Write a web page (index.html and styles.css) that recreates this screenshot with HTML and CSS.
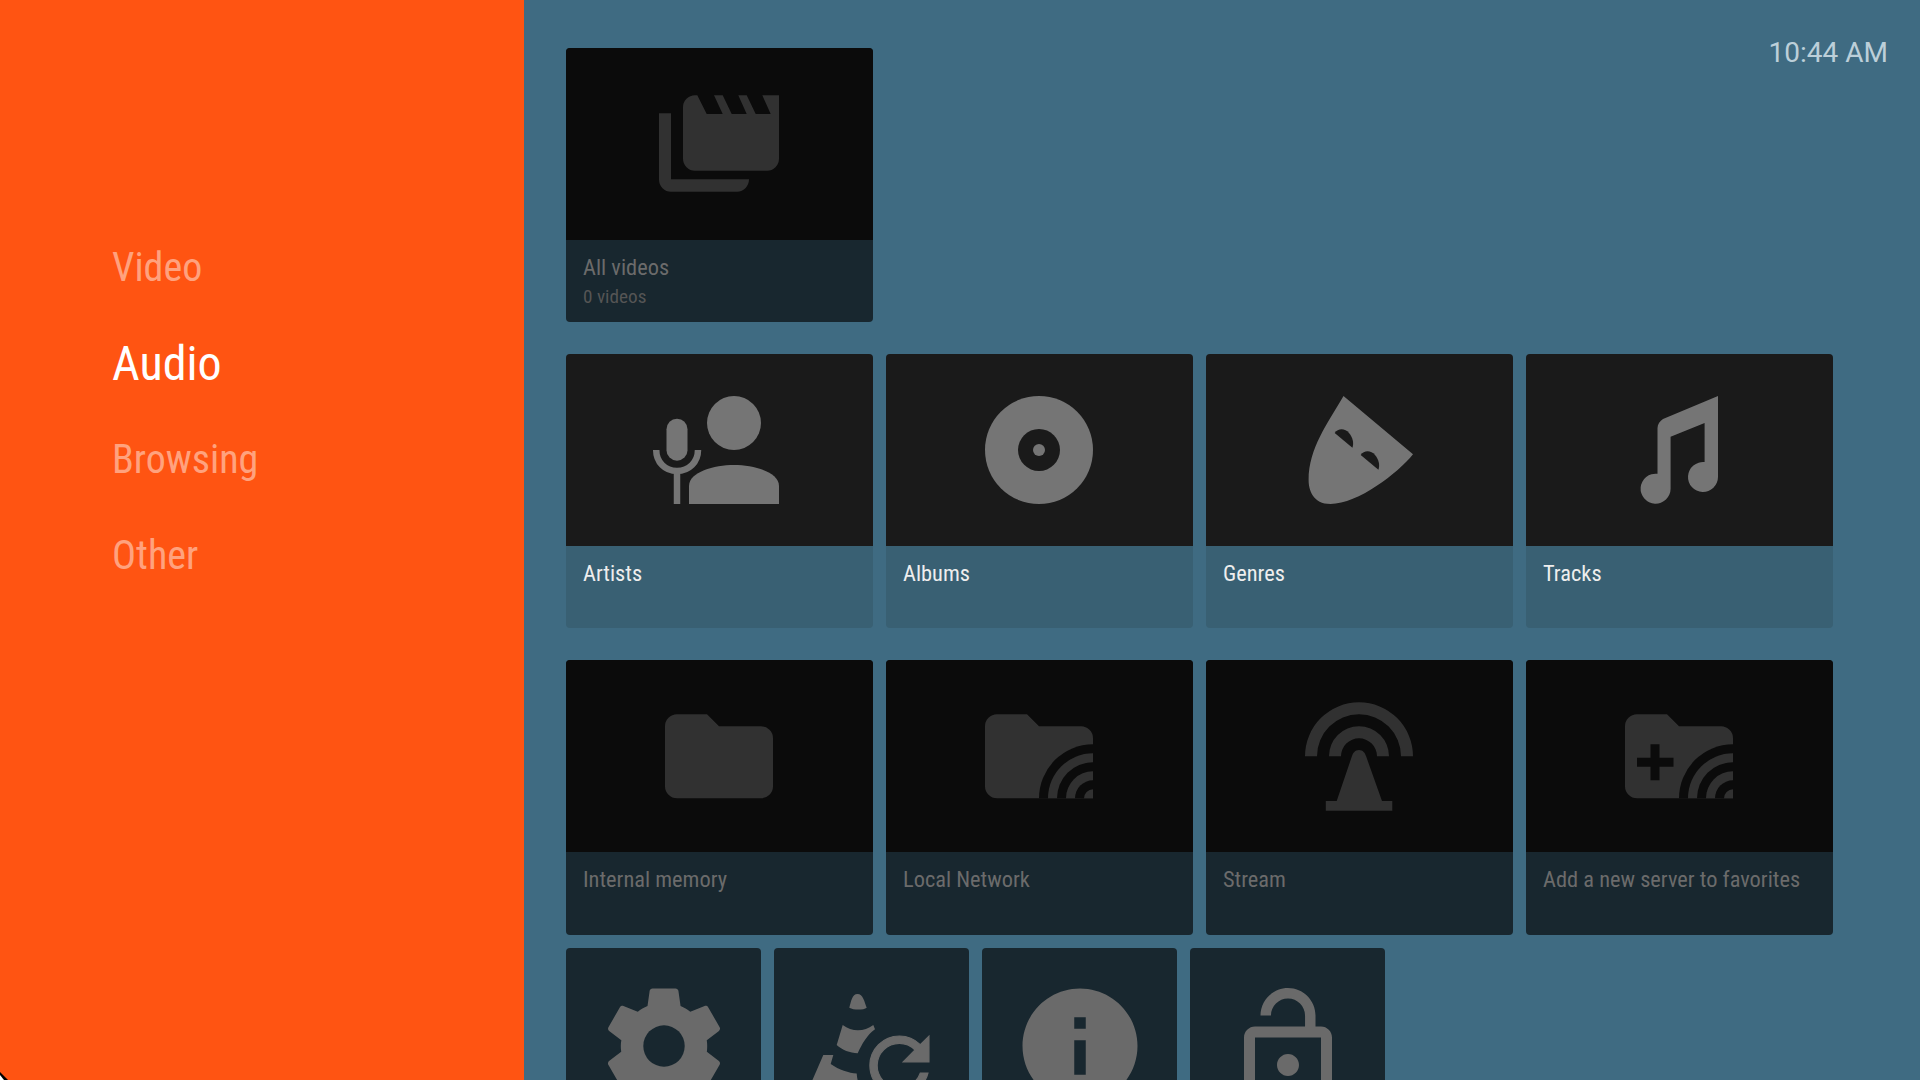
FILE: index.html
```html
<!DOCTYPE html>
<html lang="en">
<head>
<meta charset="utf-8">
<title>VLC</title>
<link rel="stylesheet" href="styles.css">
</head>
<body>
<aside class="sidebar">
  <nav class="nav">
    <div class="nav-item">Video</div>
    <div class="nav-item active">Audio</div>
    <div class="nav-item">Browsing</div>
    <div class="nav-item">Other</div>
  </nav>
</aside>
<main class="main">
  <section class="row row-top">
    <article class="card dim">
      <div class="thumb"><svg class="icon" viewBox="0 0 144 144"><path d="M11 41.3H23V107.3H101C101 114 96 119.7 89 119.7H23A12 12 0 0 1 11 107.7Z"/><path d="M35 35.3A12 12 0 0 1 47 23.3H49.3L58.7 42H74.7L66 23.3H74.7L83.7 42H98.7L90.3 23.3H98.7L107.7 42H122.7L114.3 23.3H131V86.7A12 12 0 0 1 119 98.7H47A12 12 0 0 1 35 86.7Z"/></svg></div>
      <div class="footer"><div class="title">All videos</div><div class="sub">0 videos</div></div>
    </article>
    <div class="clock">10:44 AM</div>
  </section>
  <section class="row">
    <article class="card">
      <div class="thumb"><svg class="icon" viewBox="0 0 144 144"><circle cx="86" cy="45" r="27"/><path d="M41 126V108C41 94 66 87 86 87S131 94 131 108V126Z"/><rect x="18.5" y="40.7" width="21" height="42" rx="10.5"/><path class="line" d="M8.2 72C8.2 84 17 93 29 93S50 84 50 72M29 93V126"/></svg></div>
      <div class="footer"><div class="title">Artists</div></div>
    </article>
    <article class="card">
      <div class="thumb"><svg class="icon" viewBox="0 0 144 144"><circle cx="71" cy="72" r="54"/><circle class="cut" cx="71" cy="72" r="21"/><circle cx="71" cy="72" r="6"/></svg></div>
      <div class="footer"><div class="title">Albums</div></div>
    </article>
    <article class="card">
      <div class="thumb"><svg class="icon" viewBox="0 0 144 144"><path d="M55.5 18L125 76.3C110 95 70 126 42.5 126C25 126 20.6 112 20.6 102C20.6 70 40 45 55.5 18Z"/><path class="cut" d="M46.7 55C50 50 57 50 61 55C65 60 66 65 64.4 69.7Z"/><path class="cut" d="M72.7 77C76 72 83 72 87 77C91 82 92 87 90.4 91.7Z"/></svg></div>
      <div class="footer"><div class="title">Genres</div></div>
    </article>
    <article class="card">
      <div class="thumb"><svg class="icon" viewBox="0 0 144 144"><path d="M110 18V99A15 15 0 1 1 96.6 84.1V45L62.6 58.7V110.7A15 15 0 1 1 49.5 95.8V50C49.5 46 52 43 55 41Z"/></svg></div>
      <div class="footer"><div class="title">Tracks</div></div>
    </article>
  </section>
  <section class="row row-third">
    <article class="card dim">
      <div class="thumb"><svg class="icon" viewBox="0 0 144 144"><path d="M29 30.3H59L71 42.3H113A12 12 0 0 1 125 54.3V102.3A12 12 0 0 1 113 114.3H29A12 12 0 0 1 17 102.3V42.3A12 12 0 0 1 29 30.3Z"/></svg></div>
      <div class="footer"><div class="title">Internal memory</div></div>
    </article>
    <article class="card dim">
      <div class="thumb"><svg class="icon" viewBox="0 0 144 144"><path d="M29 30.3H59L71 42.3H113A12 12 0 0 1 125 54.3V102.3A12 12 0 0 1 113 114.3H29A12 12 0 0 1 17 102.3V42.3A12 12 0 0 1 29 30.3Z"/><path class="cut" d="M125 60.3A54 54 0 0 0 71 114.3H125Z"/><path d="M125 69.3A45 45 0 0 0 80 114.3H125Z"/><path class="cut" d="M125 78.3A36 36 0 0 0 89 114.3H125Z"/><path d="M125 87.3A27 27 0 0 0 98 114.3H125Z"/><path class="cut" d="M125 96.3A18 18 0 0 0 107 114.3H125Z"/><path d="M125 105.3A9 9 0 0 0 116 114.3H125Z"/></svg></div>
      <div class="footer"><div class="title">Local Network</div></div>
    </article>
    <article class="card dim">
      <div class="thumb"><svg class="icon" viewBox="0 0 144 144"><path d="M17 72.3A54 54 0 0 1 125 72.3H113A42 42 0 0 0 29 72.3Z"/><path d="M41 72.3A30 30 0 0 1 101 72.3H89A18 18 0 0 0 53 72.3Z"/><path d="M71 66C75 66 77 69 78 72L94 117H104.3V126.7H37.8V117H48.7L64 72C65 69 67 66 71 66Z"/></svg></div>
      <div class="footer"><div class="title">Stream</div></div>
    </article>
    <article class="card dim">
      <div class="thumb"><svg class="icon" viewBox="0 0 144 144"><path d="M29 30.3H59L71 42.3H113A12 12 0 0 1 125 54.3V102.3A12 12 0 0 1 113 114.3H29A12 12 0 0 1 17 102.3V42.3A12 12 0 0 1 29 30.3Z"/><path class="cut" d="M125 60.3A54 54 0 0 0 71 114.3H125Z"/><path d="M125 69.3A45 45 0 0 0 80 114.3H125Z"/><path class="cut" d="M125 78.3A36 36 0 0 0 89 114.3H125Z"/><path d="M125 87.3A27 27 0 0 0 98 114.3H125Z"/><path class="cut" d="M125 96.3A18 18 0 0 0 107 114.3H125Z"/><path d="M125 105.3A9 9 0 0 0 116 114.3H125Z"/><path class="cut" d="M42.5 60.3H51.5V73.8H65.5V82.8H51.5V96.3H42.5V82.8H29V73.8H42.5Z"/></svg></div>
      <div class="footer"><div class="title">Add a new server to favorites</div></div>
    </article>
  </section>
  <section class="row row-tiles">
    <div class="tile"><svg class="tile-gear" viewBox="0 0 24 24"><path d="M19.14 12.94c.04-.3.06-.61.06-.94 0-.32-.02-.64-.07-.94l2.03-1.58c.18-.14.23-.41.12-.61l-1.92-3.32c-.12-.22-.37-.29-.59-.22l-2.39.96c-.5-.38-1.03-.7-1.62-.94l-.36-2.54c-.04-.24-.24-.41-.48-.41h-3.84c-.24 0-.43.17-.47.41l-.36 2.54c-.59.24-1.13.57-1.62.94l-2.39-.96c-.22-.08-.47 0-.59.22L2.74 8.87c-.12.21-.08.47.12.61l2.03 1.58c-.05.3-.09.63-.09.94s.02.64.07.94l-2.03 1.58c-.18.14-.23.41-.12.61l1.92 3.32c.12.22.37.29.59.22l2.39-.96c.5.38 1.03.7 1.62.94l.36 2.54c.05.24.24.41.48.41h3.84c.24 0 .44-.17.47-.41l.36-2.54c.59-.24 1.13-.56 1.62-.94l2.39.96c.22.08.47 0 .59-.22l1.92-3.32c.12-.22.07-.47-.12-.61l-2.01-1.58z"/><circle class="gear-hole" cx="12" cy="12" r="3.45"/></svg></div>
    <div class="tile"><svg class="tile-full" viewBox="0 0 195 195"><path d="M75.3 59.7C77 54 78 46 83.5 46S90.5 54 92.7 59.7C90 62 80 62.5 75.3 59.7Z"/><path d="M68.7 77C78 84 90 84 99.3 77L101 81.3C93 87 88 96 83.7 105.3C76 105 68 102 62.7 97Z"/><path d="M49.3 107H59.3L56.7 116C65 122 75 125 82.7 125.5C83 130 84 135 86 140H35Z"/><g transform="translate(81 73.2) scale(3.7)"><path class="refresh" d="M17.65 6.35C16.2 4.9 14.21 4 12 4c-4.42 0-7.99 3.58-7.99 8s3.57 8 7.99 8c3.73 0 6.84-2.55 7.73-6h-2.08c-.82 2.33-3.04 4-5.65 4-3.31 0-6-2.69-6-6s2.69-6 6-6c1.66 0 3.14.69 4.22 1.78L13 11h7V4l-2.35 2.35z"/></g></svg></div>
    <div class="tile"><svg class="tile-icon" viewBox="0 0 24 24"><path d="M12 2C6.48 2 2 6.48 2 12s4.48 10 10 10 10-4.48 10-10S17.52 2 12 2zm1 15h-2v-6h2v6zm0-8h-2V7h2v2z"/></svg></div>
    <div class="tile"><svg class="tile-lock" viewBox="0 1 24 21"><path d="M12 17c1.1 0 2-.9 2-2s-.9-2-2-2-2 .9-2 2 .9 2 2 2zm6-9h-1V6c0-2.76-2.24-5-5-5S7 3.24 7 6h1.9c0-1.71 1.39-3.1 3.1-3.1 1.71 0 3.1 1.39 3.1 3.1v2H6c-1.1 0-2 .9-2 2v10c0 1.1.9 2 2 2h12c1.1 0 2-.9 2-2V10c0-1.1-.9-2-2-2zm0 12H6V10h12v10z"/></svg></div>
  </section>
</main>
<svg class="cursor" viewBox="0 0 8 8"><path d="M0 0L8 8H0Z" fill="#000"/><path d="M0 3L4 8H0Z" fill="#fff"/></svg>
</body>
</html>
```

FILE: styles.css
```css
html, body {
  margin: 0;
  height: 1080px;
  overflow: hidden;
}
body {
  display: flex;
  background: #3f6b82;
  font-family: Roboto, "Liberation Sans", sans-serif;
  font-stretch: 75%;
}
.sidebar {
  width: 524px;
  flex: none;
  background: #ff5412;
}
.nav {
  padding-top: 219px;
}
.nav-item {
  height: 96px;
  display: flex;
  align-items: center;
  padding-left: 112px;
  font-size: 40px;
  color: #ffa27e;
}
.nav-item.active {
  font-size: 48px;
  color: #fff;
}
.main {
  flex: 1;
  min-width: 0;
  box-sizing: border-box;
  padding: 48px 32px 0 42px;
}
.row {
  display: flex;
  gap: 13px;
  margin-bottom: 32px;
}
.row-top {
  gap: 0;
}
.row-third {
  margin-bottom: 13px;
}
.row-third .card {
  height: 275px;
}
.clock {
  margin-left: auto;
  margin-top: -15px;
  font-size: 28px;
  line-height: 40px;
  font-stretch: 100%;
  color: #bccfd9;
}
.card {
  --thumb: #1a1a1a;
  --foot: #396073;
  --mark: #757575;
  --text: #eeeeee;
  --subtext: #aaaaaa;
  width: 307px;
  height: 274px;
  flex: none;
  border-radius: 4px;
  overflow: hidden;
  background: var(--foot);
}
.card.dim {
  --thumb: #0b0b0b;
  --foot: #18272f;
  --mark: #313131;
  --text: #6b6b6b;
  --subtext: #555555;
}
.thumb {
  height: 192px;
  box-sizing: border-box;
  padding-left: 1px;
  background: var(--thumb);
  display: flex;
  align-items: center;
  justify-content: center;
}
.icon {
  width: 144px;
  height: 144px;
  fill: var(--mark);
}
.icon .cut {
  fill: var(--thumb);
}
.icon .line {
  fill: none;
  stroke: var(--mark);
  stroke-width: 6.5;
}
.footer {
  padding: 13px 17px 0;
}
.title {
  font-size: 22.4px;
  line-height: 28px;
  color: var(--text);
}
.sub {
  margin-top: 5px;
  font-size: 19.2px;
  line-height: 22px;
  color: var(--subtext);
}
.tile {
  width: 195px;
  height: 195px;
  flex: none;
  border-radius: 4px;
  background: #18272f;
  display: flex;
  align-items: center;
  justify-content: center;
  fill: #6a6a6a;
}
.tile-icon {
  width: 138px;
  height: 138px;
}
.tile-gear {
  width: 144px;
  height: 144px;
}
.gear-hole {
  fill: #18272f;
}
.tile-full {
  width: 195px;
  height: 195px;
}
.tile-lock {
  width: 132px;
  height: 115.5px;
}
.refresh {
  stroke: #6a6a6a;
  stroke-width: 0.3;
}
.cursor {
  position: absolute;
  left: 0;
  top: 1072px;
  width: 8px;
  height: 8px;
}
```
